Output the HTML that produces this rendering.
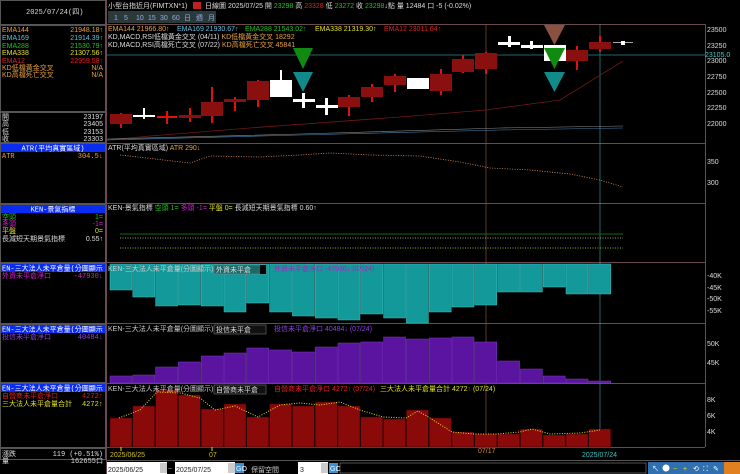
<!DOCTYPE html>
<html><head><meta charset="utf-8"><style>
body{margin:0;background:#000;width:740px;height:474px;overflow:hidden;font-family:"Liberation Sans","Noto Sans CJK TC",sans-serif}
svg{display:block}
text{font-family:"Liberation Sans","Noto Sans CJK TC",sans-serif;font-size:7px}
.m{font-family:"Liberation Mono","Noto Sans CJK TC",monospace;font-size:7px}
</style></head><body>
<svg width="740" height="474" viewBox="0 0 740 474" xmlns="http://www.w3.org/2000/svg">
<rect width="740" height="474" fill="#000"/>
<!-- left panel borders -->
<g stroke="#555" fill="none" stroke-width="1">
<rect x="0.5" y="0.5" width="105" height="24"/>
<rect x="0.5" y="25.5" width="105" height="86"/>
<rect x="0.5" y="112.5" width="105" height="30"/>
<rect x="0.5" y="143.5" width="105" height="60"/>
<rect x="0.5" y="204.5" width="105" height="58"/>
<rect x="0.5" y="263.5" width="105" height="60"/>
<rect x="0.5" y="324.5" width="105" height="58"/>
<rect x="0.5" y="383.5" width="105" height="64"/>
<rect x="0.5" y="448.5" width="105" height="11"/>
</g>
<text x="26" y="14" fill="#ddd" class="m">2025/07/24(四)</text>
<g class="m">
<text x="2" y="32" fill="#e8a040">EMA144</text><text x="103" y="32" fill="#e8a040" text-anchor="end">21948.18↑</text>
<text x="2" y="40" fill="#60c0e0">EMA169</text><text x="103" y="40" fill="#60c0e0" text-anchor="end">21914.39↑</text>
<text x="2" y="48" fill="#20c020">EMA288</text><text x="103" y="48" fill="#20c020" text-anchor="end">21530.79↑</text>
<text x="2" y="55" fill="#e0e020">EMA338</text><text x="103" y="55" fill="#e0e020" text-anchor="end">21307.56↑</text>
<text x="2" y="63" fill="#e02020">EMA12</text><text x="103" y="63" fill="#e02020" text-anchor="end">22959.58↑</text>
<text x="2" y="70" fill="#e8a040">KD低檔黃金交叉</text><text x="103" y="70" fill="#e8a040" text-anchor="end">N/A</text>
<text x="2" y="77" fill="#e8a040">KD高檔死亡交叉</text><text x="103" y="77" fill="#e8a040" text-anchor="end">N/A</text>
<text x="2" y="119" fill="#ddd">開</text><text x="103" y="119" fill="#ddd" text-anchor="end">23197</text>
<text x="2" y="126" fill="#ddd">高</text><text x="103" y="126" fill="#ddd" text-anchor="end">23405</text>
<text x="2" y="134" fill="#ddd">低</text><text x="103" y="134" fill="#ddd" text-anchor="end">23153</text>
<text x="2" y="141" fill="#ddd">收</text><text x="103" y="141" fill="#ddd" text-anchor="end">23303</text>
</g>
<rect x="1" y="144" width="104" height="8" fill="#0a2cf0"/>
<text x="53" y="150.5" fill="#fff" text-anchor="middle" class="m">ATR(平均真實區域)</text>
<text x="2" y="158" fill="#e8a040" class="m">ATR</text><text x="103" y="158" fill="#e8a040" text-anchor="end" class="m">304.5↓</text>
<rect x="1" y="205" width="104" height="8" fill="#0a2cf0"/>
<text x="53" y="211.5" fill="#fff" text-anchor="middle" class="m">KEN-景氣指標</text>
<g class="m">
<text x="2" y="219" fill="#20c020">空頭</text><text x="103" y="219" fill="#20c020" text-anchor="end">1=</text>
<text x="2" y="226" fill="#d020d0">多頭</text><text x="103" y="226" fill="#d020d0" text-anchor="end">-1=</text>
<text x="2" y="233" fill="#e0e020">平盤</text><text x="103" y="233" fill="#e0e020" text-anchor="end">0=</text>
<text x="2" y="241" fill="#ddd">長減短天期景氣指標</text><text x="103" y="241" fill="#ddd" text-anchor="end">0.55↑</text>
</g>
<rect x="1" y="264" width="104" height="8" fill="#0a2cf0"/>
<text x="2" y="270.5" fill="#fff" class="m">EN-三大法人未平倉量(分圖顯示</text>
<text x="2" y="278" fill="#d020d0" class="m">外資未平倉淨口</text><text x="103" y="278" fill="#d020d0" text-anchor="end" class="m">-47930↓</text>
<rect x="1" y="325" width="104" height="8" fill="#0a2cf0"/>
<text x="2" y="331.5" fill="#fff" class="m">EN-三大法人未平倉量(分圖顯示</text>
<text x="2" y="339" fill="#9040e0" class="m">投信未平倉淨口</text><text x="103" y="339" fill="#9040e0" text-anchor="end" class="m">40484↓</text>
<rect x="1" y="384" width="104" height="8" fill="#0a2cf0"/>
<text x="2" y="390.5" fill="#fff" class="m">EN-三大法人未平倉量(分圖顯示</text>
<text x="2" y="398" fill="#e02020" class="m">自營商未平倉淨口</text><text x="103" y="398" fill="#e02020" text-anchor="end" class="m">4272↑</text>
<text x="2" y="406" fill="#e0e020" class="m">三大法人未平倉量合計</text><text x="103" y="406" fill="#e0e020" text-anchor="end" class="m">4272↑</text>
<text x="2" y="456" fill="#ddd" class="m">漲跌</text><text x="103" y="456" fill="#ddd" text-anchor="end" class="m">119 (+0.51%)</text>
<text x="2" y="463" fill="#ddd" class="m">量</text><text x="103" y="463" fill="#ddd" text-anchor="end" class="m">162655口</text>

<!-- top header -->
<text x="108" y="8" fill="#ddd">小型台指近月(FIMTXN*1)</text>
<rect x="193" y="2" width="8" height="7" fill="#c02020"/>
<text x="205" y="8" fill="#ddd">日線圖  2025/07/25 開 <tspan fill="#20c020">23298</tspan> 高 <tspan fill="#e02020">23328</tspan> 低 <tspan fill="#20c020">23272</tspan> 收 <tspan fill="#20c020">23298</tspan>↓點 量 12484 口  -5 (-0.02%)</text>
<g font-size="6">
<rect x="108" y="11" width="108" height="12" fill="#2a3a3a"/>
<text x="114" y="20" fill="#9ad">1</text><text x="124" y="20" fill="#9ad">5</text><text x="136" y="20" fill="#9ad">10</text><text x="148" y="20" fill="#9ad">15</text><text x="160" y="20" fill="#9ad">30</text><text x="172" y="20" fill="#9ad">60</text><text x="184" y="20" fill="#9ad">日</text><text x="196" y="20" fill="#9ad">週</text><text x="208" y="20" fill="#9ad">月</text>
</g>
<!-- main chart frame -->
<g stroke="#6a4a50" fill="none">
<line x1="106" y1="24.5" x2="705" y2="24.5"/>
<line x1="705.5" y1="24" x2="705.5" y2="447"/>
<line x1="106" y1="143.5" x2="705" y2="143.5"/>
<line x1="106" y1="203.5" x2="705" y2="203.5"/>
<line x1="106" y1="262.5" x2="705" y2="262.5"/>
<line x1="106" y1="323.5" x2="705" y2="323.5"/>
<line x1="106" y1="383.5" x2="705" y2="383.5"/>
<line x1="106" y1="447.5" x2="705" y2="447.5"/>
<line x1="106.5" y1="0" x2="106.5" y2="474"/>
</g>
<line x1="486" y1="24" x2="486" y2="447" stroke="#a06040" stroke-width="0.6"/>
<line x1="600" y1="24" x2="600" y2="447" stroke="#4aa" stroke-width="0.6"/>
<line x1="107" y1="55" x2="705" y2="55" stroke="#2a8a8a" stroke-width="0.8"/>
<!-- EMA lines -->
<polyline points="107,140 150,136 250,128 400,117 486,110 560,100 623,61" fill="none" stroke="#701818" stroke-width="0.8"/>
<polyline points="107,139 300,134 500,128 623,126" fill="none" stroke="#888" stroke-width="0.6"/>
<polyline points="107,140 300,135 500,130 623,128" fill="none" stroke="#4080b0" stroke-width="0.6"/>
<!-- candles -->
<g fill="#8a1010" stroke="none">
<rect x="120" y="113" width="2" height="15" fill="#e01010"/><rect x="110" y="114" width="22" height="10"/>
<rect x="166" y="111" width="2" height="13" fill="#e01010"/><rect x="157" y="116" width="20" height="2" fill="#e01010"/>
<rect x="189" y="108" width="2" height="14" fill="#e01010"/><rect x="179" y="115" width="22" height="3"/>
<rect x="211" y="87" width="2" height="36" fill="#e01010"/><rect x="201" y="102" width="22" height="14"/>
<rect x="234" y="97" width="2" height="14" fill="#e01010"/><rect x="224" y="99" width="22" height="3"/>
<rect x="257" y="80" width="2" height="27" fill="#e01010"/><rect x="247" y="81" width="22" height="19"/>
<rect x="348" y="95" width="2" height="21" fill="#e01010"/><rect x="338" y="97" width="22" height="10"/>
<rect x="371" y="84" width="2" height="18" fill="#e01010"/><rect x="361" y="87" width="22" height="10"/>
<rect x="394" y="74" width="2" height="18" fill="#e01010"/><rect x="384" y="76" width="22" height="9"/>
<rect x="440" y="69" width="2" height="26" fill="#e01010"/><rect x="430" y="74" width="22" height="17"/>
<rect x="462" y="55" width="2" height="18" fill="#e01010"/><rect x="452" y="59" width="22" height="13"/>
<rect x="485" y="52" width="2" height="22" fill="#e01010"/><rect x="475" y="53" width="22" height="16"/>
<rect x="576" y="46" width="2" height="24" fill="#e01010"/><rect x="566" y="50" width="22" height="11"/>
<rect x="599" y="36" width="2" height="16" fill="#e01010"/><rect x="589" y="42" width="22" height="7"/>
</g>
<g fill="#fff">
<rect x="133" y="115" width="22" height="2"/><rect x="143" y="108" width="2" height="11"/>
<rect x="280" y="70" width="2" height="27"/><rect x="270" y="80" width="22" height="17"/>
<rect x="293" y="99" width="22" height="3"/><rect x="302" y="93" width="3" height="15"/>
<rect x="316" y="105" width="22" height="3"/><rect x="325" y="98" width="3" height="17"/>
<rect x="407" y="78" width="22" height="11"/>
<rect x="498" y="42" width="22" height="3"/><rect x="508" y="36" width="3" height="11"/>
<rect x="521" y="45" width="22" height="3"/><rect x="530" y="41" width="3" height="8"/>
<rect x="544" y="45" width="22" height="16"/>
<rect x="613" y="42" width="20" height="1" fill="#aaa"/><rect x="621" y="41" width="4" height="4"/>
</g>
<polygon points="544,25 565,25 554.5,45" fill="#8a5040"/>
<polygon points="544,48 565,48 554.5,69" fill="#108a10"/>
<polygon points="293,48 313,48 303,69" fill="#108a10"/>
<polygon points="544,72 565,72 554.5,92" fill="#118a8a"/>
<polygon points="293,72 313,72 303,92" fill="#118a8a"/>
<text x="108" y="31" fill="#e8a040">EMA144 21966.80↑</text>
<text x="177" y="31" fill="#60c0e0">EMA169 21930.67↑</text>
<text x="245" y="31" fill="#20c020">EMA288 21543.02↑</text>
<text x="315" y="31" fill="#e0e020">EMA338 21319.30↑</text>
<text x="384" y="31" fill="#e02020">EMA12 23011.64↑</text>
<text x="108" y="39" fill="#ddd">KD,MACD,RSI低檔黃金交叉  (04/11)  <tspan fill="#e8a040">KD低檔黃金交叉 18292</tspan></text>
<text x="108" y="47" fill="#ddd">KD,MACD,RSI高檔死亡交叉  (07/22)  <tspan fill="#e8a040">KD高檔死亡交叉 45841</tspan></text>
<g fill="#ddd" font-size="6.5">
<text x="707" y="32">23500</text><text x="707" y="48">23250</text><text x="707" y="63">23000</text>
<text x="707" y="79">22750</text><text x="707" y="95">22500</text><text x="707" y="110">22250</text><text x="707" y="126">22000</text>
<text x="705" y="57" fill="#4cc">23105.0</text>
</g>
<!-- ATR -->
<text x="108" y="150" fill="#ddd">ATR(平均真實區域)   <tspan fill="#e8a040">ATR 290↓</tspan></text>
<polyline points="120,155 190,163 210,156 260,157 300,155 330,153 370,155 420,156 460,162 490,168 530,170 570,174 600,180 623,187" fill="none" stroke="#e8905a" stroke-width="0.8" stroke-dasharray="1,1.5"/>
<text x="707" y="164" fill="#ddd" font-size="6.5">350</text><text x="707" y="185" fill="#ddd" font-size="6.5">300</text>
<!-- KEN -->
<text x="108" y="210" fill="#ddd">KEN-景氣指標    <tspan fill="#20c020">空頭 1=</tspan>   <tspan fill="#d020d0">多頭 -1=</tspan>   <tspan fill="#e0e020">平盤 0=</tspan>   長減短天期景氣指標 0.60↑</text>
<line x1="120" y1="234" x2="623" y2="234" stroke="#106a10"/>
<line x1="120" y1="238" x2="623" y2="238" stroke="#ccc" stroke-dasharray="1,1.5" stroke-width="0.8"/>
<line x1="120" y1="248" x2="623" y2="248" stroke="#e0e020" stroke-dasharray="1,1.5" stroke-width="0.8"/>
<!-- teal bars -->
<g fill="#139999" stroke="#40c0c0" stroke-width="0.5">
<rect x="110" y="264" width="22" height="26"/><rect x="132.8" y="264" width="22" height="33"/><rect x="155.6" y="264" width="22" height="42"/><rect x="178.4" y="264" width="22" height="41"/><rect x="201.2" y="264" width="22" height="42"/><rect x="224" y="264" width="22" height="48"/><rect x="246.8" y="264" width="22" height="39"/><rect x="269.6" y="264" width="22" height="48"/><rect x="292.4" y="264" width="22" height="52"/><rect x="315.2" y="264" width="22" height="54"/><rect x="338" y="264" width="22" height="56"/><rect x="360.8" y="264" width="22" height="50"/><rect x="383.6" y="264" width="22" height="54"/><rect x="406.4" y="264" width="22" height="59"/><rect x="429.2" y="264" width="22" height="48"/><rect x="452" y="264" width="22" height="43"/><rect x="474.8" y="264" width="22" height="41"/><rect x="497.6" y="264" width="22" height="28"/><rect x="520.4" y="264" width="22" height="28"/><rect x="543.2" y="264" width="22" height="23"/><rect x="566" y="264" width="22" height="30"/><rect x="588.8" y="264" width="22" height="30"/>
</g>
<text x="108" y="271" fill="#ccc">KEN-三大法人未平倉量(分圖顯示)</text>
<rect x="214" y="265" width="52" height="9" fill="#1a6a6a" stroke="#888" stroke-width="0.5"/><text x="216" y="272" fill="#ddd" font-size="6">外資未平倉</text>
<rect x="260" y="265" width="6" height="9" fill="#000"/>
<text x="274" y="271" fill="#b020c0">外資未平倉淨口 -47930↓ (07/24)</text>
<g fill="#ddd" font-size="6.5"><text x="707" y="278">-40K</text><text x="707" y="290">-45K</text><text x="707" y="301">-50K</text><text x="707" y="313">-55K</text></g>
<!-- purple bars -->
<g fill="#5a14a0" stroke="#7a3ac0" stroke-width="0.5">
<rect x="110" y="376" width="22" height="7"/><rect x="132.8" y="375" width="22" height="8"/><rect x="155.6" y="367" width="22" height="16"/><rect x="178.4" y="362" width="22" height="21"/><rect x="201.2" y="356" width="22" height="27"/><rect x="224" y="353" width="22" height="30"/><rect x="246.8" y="348" width="22" height="35"/><rect x="269.6" y="350" width="22" height="33"/><rect x="292.4" y="352" width="22" height="31"/><rect x="315.2" y="347" width="22" height="36"/><rect x="338" y="343" width="22" height="40"/><rect x="360.8" y="342" width="22" height="41"/><rect x="383.6" y="337" width="22" height="46"/><rect x="406.4" y="339" width="22" height="44"/><rect x="429.2" y="338" width="22" height="45"/><rect x="452" y="337" width="22" height="46"/><rect x="474.8" y="342" width="22" height="41"/><rect x="497.6" y="361" width="22" height="22"/><rect x="520.4" y="369" width="22" height="14"/><rect x="543.2" y="376" width="22" height="7"/><rect x="566" y="379" width="22" height="4"/><rect x="588.8" y="381" width="22" height="2"/>
</g>
<text x="108" y="331" fill="#ccc">KEN-三大法人未平倉量(分圖顯示)</text>
<rect x="214" y="325" width="52" height="9" fill="#111" stroke="#888" stroke-width="0.5"/><text x="216" y="332" fill="#ddd" font-size="6">投信未平倉</text>
<text x="274" y="331" fill="#9040e0">投信未平倉淨口 40484↓ (07/24)</text>
<g fill="#ddd" font-size="6.5"><text x="707" y="346">50K</text><text x="707" y="365">45K</text></g>
<!-- red bars -->
<g fill="#8a0a0a" stroke="#300" stroke-width="0.5">
<rect x="110" y="418" width="22" height="29"/><rect x="132.8" y="406" width="22" height="41"/><rect x="155.6" y="390" width="22" height="57"/><rect x="178.4" y="395" width="22" height="52"/><rect x="201.2" y="409" width="22" height="38"/><rect x="224" y="404" width="22" height="43"/><rect x="246.8" y="417" width="22" height="30"/><rect x="269.6" y="404" width="22" height="43"/><rect x="292.4" y="406" width="22" height="41"/><rect x="315.2" y="402" width="22" height="45"/><rect x="338" y="406" width="22" height="41"/><rect x="360.8" y="417" width="22" height="30"/><rect x="383.6" y="419" width="22" height="28"/><rect x="406.4" y="410" width="22" height="37"/><rect x="429.2" y="418" width="22" height="29"/><rect x="452" y="432" width="22" height="15"/><rect x="474.8" y="434" width="22" height="13"/><rect x="497.6" y="434" width="22" height="13"/><rect x="520.4" y="429" width="22" height="18"/><rect x="543.2" y="435" width="22" height="12"/><rect x="566" y="434" width="22" height="13"/><rect x="588.8" y="429" width="22" height="18"/>
</g>
<polyline points="119,418 140,410 157,392 180,393 200,398 215,410 235,406 258,417 280,405 300,403 320,405 340,402 360,410 383,417 406,418 418,411 430,418 452,432 474,434 497,434 520,432 532,429 550,434 580,433 600,430" fill="none" stroke="#e0e020" stroke-width="1" stroke-dasharray="1,1.5"/>
<text x="108" y="391" fill="#ccc">KEN-三大法人未平倉量(分圖顯示)</text>
<rect x="214" y="385" width="52" height="9" fill="#111" stroke="#888" stroke-width="0.5"/><text x="216" y="392" fill="#ddd" font-size="6">自營商未平倉</text>
<text x="274" y="391" fill="#e02020">自營商未平倉淨口 4272↑ (07/24)</text>
<text x="380" y="391" fill="#e0e020">三大法人未平倉量合計 4272<tspan fill="#e02020">↑</tspan> (07/24)</text>
<g fill="#ddd" font-size="6.5"><text x="707" y="402">8K</text><text x="707" y="418">6K</text><text x="707" y="434">4K</text></g>
<!-- date axis -->
<line x1="121" y1="447" x2="121" y2="451" stroke="#e0e020"/><line x1="212" y1="447" x2="212" y2="451" stroke="#e0e020"/>
<text x="110" y="457" fill="#d0c020" font-size="6">2025/06/25</text>
<text x="209" y="457" fill="#d0c020" font-size="6">07</text>
<text x="478" y="453" fill="#e08040" font-size="5.5">07/17</text>
<text x="582" y="457" fill="#40c0c0" font-size="6">2025/07/24</text>
<!-- bottom bar -->
<line x1="106" y1="460.5" x2="740" y2="460.5" stroke="#555"/>
<rect x="107" y="462" width="60" height="12" fill="#fff"/><text x="108" y="472" fill="#222" font-size="9">2025/06/25</text>
<rect x="160" y="463" width="7" height="10" fill="#ccc"/>
<text x="168" y="471" fill="#aaa" font-size="8">~</text>
<rect x="175" y="462" width="60" height="12" fill="#fff"/><text x="176" y="472" fill="#222" font-size="9">2025/07/25</text>
<rect x="228" y="463" width="7" height="10" fill="#ccc"/>
<rect x="235" y="463" width="9" height="10" fill="#3a90d0"/><text x="236" y="471" fill="#fff" font-size="6">GO</text>
<text x="251" y="472" fill="#ccc" font-size="11">保留空間</text>
<rect x="298" y="462" width="30" height="12" fill="#fff"/><text x="300" y="472" fill="#222" font-size="9">3</text>
<rect x="321" y="463" width="7" height="10" fill="#ccc"/>
<rect x="329" y="463" width="9" height="10" fill="#3a90d0"/><text x="330" y="471" fill="#fff" font-size="6">GO</text>
<rect x="340" y="463" width="306" height="10" fill="#000" stroke="#888" stroke-width="0.6"/>
<rect x="648" y="462" width="92" height="12" fill="#3070b0"/>
<g fill="#fff" font-size="8"><text x="652" y="471">↖</text><circle cx="666" cy="468" r="3.5" fill="#fff"/><text x="673" y="471" fill="#fd0">−</text><text x="683" y="471" fill="#fd0">+</text><text x="693" y="471">⟲</text><text x="703" y="471">⛶</text><text x="713" y="471">✎</text></g>
<rect x="724" y="462" width="16" height="12" fill="#e08020"/>
</svg>
</body></html>
